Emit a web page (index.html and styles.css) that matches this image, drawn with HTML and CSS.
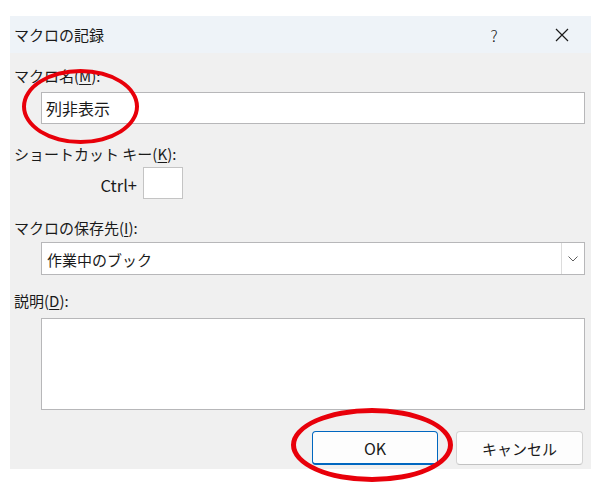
FILE: index.html
```html
<!DOCTYPE html>
<html lang="ja">
<head>
<meta charset="utf-8">
<title>マクロの記録</title>
<link rel="stylesheet" href="styles.css">
</head>
<body>
<div class="dialog">
  <div class="titlebar">
    <span class="title">マクロの記録</span>
    <span class="help">?</span>
    <span class="close"><svg width="14" height="14" viewBox="0 0 14 14"><path d="M1 1L13 13M13 1L1 13" stroke="#1a1a1a" stroke-width="1.2" fill="none"/></svg></span>
  </div>
  <div class="content">
    <div class="label">マクロ名(<u>M</u>):</div>
    <div class="field name">列非表示</div>
    <div class="label gap-l2">ショートカット キー(<u>K</u>):</div>
    <div class="ctrl-row"><span class="ctrl">Ctrl+</span><div class="keybox"></div></div>
    <div class="label gap-l3">マクロの保存先(<u>I</u>):</div>
    <div class="field select"><span class="sel-text">作業中のブック</span><div class="drop"><svg width="10" height="6" viewBox="0 0 10 6"><path d="M0.5 0.5L5 5L9.5 0.5" stroke="#5f5f5f" stroke-width="1" fill="none"/></svg></div></div>
    <div class="label gap-l4">説明(<u>D</u>):</div>
    <div class="field desc"></div>
    <div class="buttons">
      <div class="btn ok">OK</div>
      <div class="btn cancel">キャンセル</div>
    </div>
  </div>
</div>
<div class="mark mark-name"></div>
<div class="mark mark-ok"></div>
</body>
</html>
```

FILE: styles.css
```css
html, body {
  margin: 0;
  padding: 0;
  background: #ffffff;
}
body {
  position: relative;
  width: 610px;
  height: 494px;
  font-family: "Noto Sans CJK JP", "Noto Sans", sans-serif;
  color: #1a1a1a;
}
.dialog {
  margin: 16px 0 0 10px;
  width: 581px;
  background: #f0f0f0;
  display: flex;
  flex-direction: column;
}
.titlebar {
  height: 37px;
  background: #eef3f8;
  display: flex;
  align-items: center;
  padding: 0 17px 0 4px;
  font-size: 15px;
}
.title {
  flex: 1;
}
.help {
  width: 20px;
  text-align: center;
  font-size: 16px;
  font-weight: 300;
  margin-right: 46px;
}
.close {
  width: 24px;
  display: flex;
  justify-content: center;
  align-items: center;
}
.content {
  padding: 13px 6px 4px 4px;
  display: flex;
  flex-direction: column;
}
.label {
  font-size: 15px;
  line-height: 20px;
  height: 20px;
}
.label u {
  text-underline-offset: 2px;
}
.gap-l2 { margin-top: 20px; }
.gap-l3 { margin-top: 19px; }
.gap-l4 { margin-top: 16px; }
.field {
  margin-left: 27px;
  background: #ffffff;
  border: 1px solid #b7b7b9;
  box-sizing: border-box;
}
.name {
  margin-top: 6px;
  height: 32px;
  font-size: 16px;
  line-height: 30px;
  padding-left: 4px;
}
.ctrl-row {
  margin-top: 3px;
  height: 32px;
  display: flex;
  align-items: center;
}
.ctrl {
  width: 50px;
  margin-left: 73px;
  text-align: right;
  font-size: 16.5px;
  margin-top: 3px;
}
.keybox {
  margin-left: 6px;
  width: 40px;
  height: 32px;
  box-sizing: border-box;
  background: #ffffff;
  border: 1px solid #c4c4c4;
}
.select {
  margin-top: 4px;
  height: 33px;
  display: flex;
  align-items: center;
}
.sel-text {
  flex: 1;
  font-size: 15px;
  padding-left: 5px;
  padding-top: 1px;
}
.drop {
  width: 22px;
  height: 31px;
  border-left: 1px solid #dcdcdc;
  display: flex;
  align-items: center;
  justify-content: center;
  background: #ffffff;
}
.desc {
  margin-top: 7px;
  height: 92px;
}
.buttons {
  margin-top: 21px;
  display: flex;
  justify-content: flex-end;
  gap: 18px;
  padding-right: 2px;
}
.btn {
  height: 34px;
  box-sizing: border-box;
  border-radius: 4px;
  background: #fdfdfd;
  border: 1px solid #d3d3d3;
  display: flex;
  align-items: center;
  justify-content: center;
  font-size: 15px;
}
.ok {
  width: 126px;
  border: 1px solid #0067c0;
  border-bottom-width: 2px;
  font-size: 16px;
}
.cancel {
  width: 127px;
  border-bottom-color: #c2c2c2;
}
.mark {
  position: absolute;
  box-sizing: border-box;
  border-radius: 50%;
  border: 4px solid #e8000a;
}
.mark-name {
  left: 22px;
  top: 69px;
  width: 117px;
  height: 75px;
}
.mark-ok {
  left: 291px;
  top: 408px;
  width: 162px;
  height: 74px;
  border-width: 5px;
}
```
